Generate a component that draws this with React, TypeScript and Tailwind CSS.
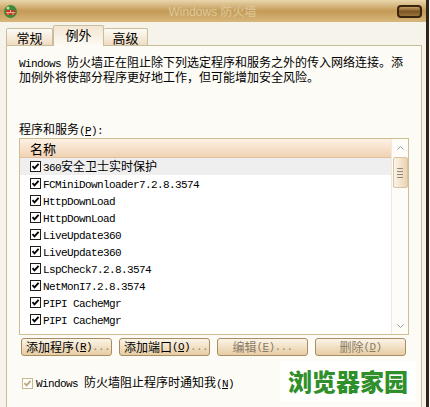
import React from 'react';

const rows = [
  '360安全卫士实时保护',
  'FCMiniDownloader7.2.8.3574',
  'HttpDownLoad',
  'HttpDownLoad',
  'LiveUpdate360',
  'LiveUpdate360',
  'LspCheck7.2.8.3574',
  'NetMonI7.2.8.3574',
  'PIPI CacheMgr',
  'PIPI CacheMgr',
];

// Latin runs in a narrow mono, CJK in Noto
function Mixed({ text }: { text: string }) {
  return (
    <>
      {text.split(/([\x20-\x7e]+)/).map((s, i) =>
        i % 2 === 1 ? (
          <span key={i} className="font-['Liberation_Mono',monospace] text-[11px] leading-none tracking-[-0.6px]">
            {s}
          </span>
        ) : (
          <React.Fragment key={i}>{s}</React.Fragment>
        )
      )}
    </>
  );
}

function Key({ k }: { k: string }) {
  return (
    <span className="font-['Liberation_Mono',monospace] text-[11px] leading-none tracking-[-0.6px]">
      (<span className="underline">{k}</span>)
    </span>
  );
}

function Check({ muted }: { muted?: boolean }) {
  return (
    <svg width="11" height="11" viewBox="0 0 11 11" className="shrink-0">
      <rect x="0.5" y="0.5" width="10" height="10" fill="#fff" stroke={muted ? '#c9b98e' : '#1d1d1d'} />
      <path d="M2.5 5.2 L4.5 7.4 L8.6 2.8" fill="none" stroke={muted ? '#bda874' : '#000'} strokeWidth="1.8" />
    </svg>
  );
}

function Btn({ label, k, faded, dots = true }: { label: string; k: string; faded?: boolean; dots?: boolean }) {
  return (
    <div
      className={`w-[91px] h-[18px] rounded-[3px] border border-[#a88e62] bg-gradient-to-b from-[#fbf4e8] to-[#e7cca2] flex items-center text-[12px] leading-none whitespace-nowrap ${
        faded ? 'text-[#8a7b66] justify-center' : 'text-black pl-[4px]'
      }`}
    >
      {label}
      <Key k={k} />
      {dots && (
        <span className="font-['Liberation_Mono',monospace] text-[11px] tracking-[-0.6px] text-[#9a8a70]">...</span>
      )}
    </div>
  );
}

export default function App() {
  return (
    <div className="w-[430px] h-[407px] overflow-hidden bg-white flex font-['Noto_Sans_CJK_SC',sans-serif] text-black relative">
      <div className="w-[429px] h-full flex flex-col bg-[#f6f3ea] border-r-[3px] border-[#2e2418]">
        {/* Title bar */}
        <div className="h-[22px] shrink-0 flex items-center px-[3px] bg-gradient-to-b from-[#e9d6ad] via-[#c49a55] to-[#d8b77c]">
          <svg width="15" height="15" viewBox="0 0 15 15">
            <circle cx="7.5" cy="7.5" r="6.5" fill="#3f8a3a" />
            <path d="M3 6 H12 V11 H3 Z" fill="#c8352a" />
            <path d="M3 8.5 H12 M7.5 6 V8.5 M5 8.5 V11 M10 8.5 V11" stroke="#f0d0a0" strokeWidth="0.8" />
            <circle cx="5" cy="4" r="1.5" fill="#bfe6a0" />
          </svg>
          <div className="flex-1 text-center text-[12px] text-[#dcc89c] pl-[10px] whitespace-pre">
            <span className="font-['Liberation_Sans',sans-serif]">Windows </span>防火墙
          </div>
          <div className="w-[25px] h-[13px] rounded-[4px] border-2 border-[#3a2410] bg-gradient-to-b from-[#c7a061] via-[#7a5526] to-[#9c7439] mr-[1px]" />
        </div>

        {/* Tabs */}
        <div className="h-[23px] shrink-0 flex items-end pl-[6px] relative z-10">
          <div className="w-[47px] h-[17px] border border-b-0 border-[#c9bd9c] rounded-t-[2px] bg-gradient-to-b from-[#fdfbf6] to-[#efdcc2] flex items-center justify-center text-[13px] leading-none">
            常规
          </div>
          <div className="w-[51px] h-[21px] -mb-px border border-b-0 border-[#c9bd9c] rounded-t-[2px] bg-gradient-to-b from-[#f3e6d2] to-[#fcfbf5] flex items-start justify-center pt-[2px] text-[13px] leading-none">
            例外
          </div>
          <div className="w-[44px] h-[17px] border border-b-0 border-l-0 border-[#c9bd9c] rounded-t-[2px] bg-gradient-to-b from-[#fdfbf6] to-[#efdcc2] flex items-center justify-center text-[13px] leading-none">
            高级
          </div>
        </div>

        {/* Panel */}
        <div className="ml-[6px] w-[416px] flex-1 border border-b-0 border-[#c9bd9c] bg-[#fcfbf5] pl-[12px] pt-[9px] text-[12px] leading-[14px]">
          <p className="w-[392px]">
            <Mixed text="Windows 防火墙正在阻止除下列选定程序和服务之外的传入网络连接。添加例外将使部分程序更好地工作，但可能增加安全风险。" />
          </p>

          <div className="mt-[38px] h-[14px]">
            程序和服务<Key k="P" />
            <span className="font-['Liberation_Mono',monospace] text-[11px] leading-none">:</span>
          </div>

          {/* List */}
          <div className="mt-[2px] w-[390px] h-[197px] border border-[#cdbf92] bg-white flex overflow-hidden">
            <div className="flex-1 flex flex-col">
              <div className="h-[19px] shrink-0 bg-gradient-to-b from-[#fdf1e4] to-[#f1d2b3] border-b border-[#e2c09c] flex items-center pl-[10px] text-[13px] leading-none">
                名称
              </div>
              {rows.map((r, i) => (
                <div
                  key={i}
                  className={`h-[17px] shrink-0 flex items-center gap-[2px] pl-[10px] text-[12px] ${
                    i === 0 ? 'bg-[#efefef]' : ''
                  }`}
                >
                  <Check />
                  <span className="leading-none">
                    <Mixed text={r} />
                  </span>
                </div>
              ))}
            </div>
            {/* Scrollbar */}
            <div className="w-[17px] shrink-0 flex flex-col items-center bg-[#fdfcf8] border-l border-[#f1eadb]">
              <div className="h-[18px] flex items-center justify-center">
                <svg width="7" height="4" viewBox="0 0 7 4">
                  <path d="M0.5 3.5 L3.5 0.5 L6.5 3.5" fill="none" stroke="#9a9a9a" />
                </svg>
              </div>
              <div className="w-[15px] h-[31px] border border-[#d8c4a0] rounded-[2px] bg-gradient-to-r from-[#fbf4ea] to-[#ecd2b2] flex flex-col items-center justify-center gap-[2px]">
                <div className="w-[6px] h-px bg-[#8f8a80]" />
                <div className="w-[6px] h-px bg-[#8f8a80]" />
                <div className="w-[6px] h-px bg-[#8f8a80]" />
                <div className="w-[6px] h-px bg-[#8f8a80]" />
              </div>
              <div className="flex-1" />
              <div className="h-[16px] flex items-center justify-center">
                <svg width="7" height="4" viewBox="0 0 7 4">
                  <path d="M0.5 0.5 L3.5 3.5 L6.5 0.5" fill="none" stroke="#9a9a9a" />
                </svg>
              </div>
            </div>
          </div>

          {/* Buttons */}
          <div className="mt-[3px] ml-[2px] flex gap-[7px]">
            <Btn label="添加程序" k="R" />
            <Btn label="添加端口" k="O" />
            <Btn label="编辑" k="E" faded />
            <Btn label="删除" k="D" faded dots={false} />
          </div>

          <div className="mt-[20px] ml-[3px] flex items-center gap-[3px]">
            <Check muted />
            <span className="leading-none">
              <Mixed text="Windows 防火墙阻止程序时通知我" />
              <Key k="N" />
            </span>
          </div>
        </div>
      </div>

      {/* Watermark */}
      <div className="absolute left-[280px] top-[361px] w-[136px] h-[40px] bg-white/90 flex items-center justify-center">
        <span className="text-[24px] font-black leading-none whitespace-nowrap text-[#2f8f2a] font-['Noto_Sans_CJK_SC',sans-serif]">
          浏览器家园
        </span>
      </div>
    </div>
  );
}
